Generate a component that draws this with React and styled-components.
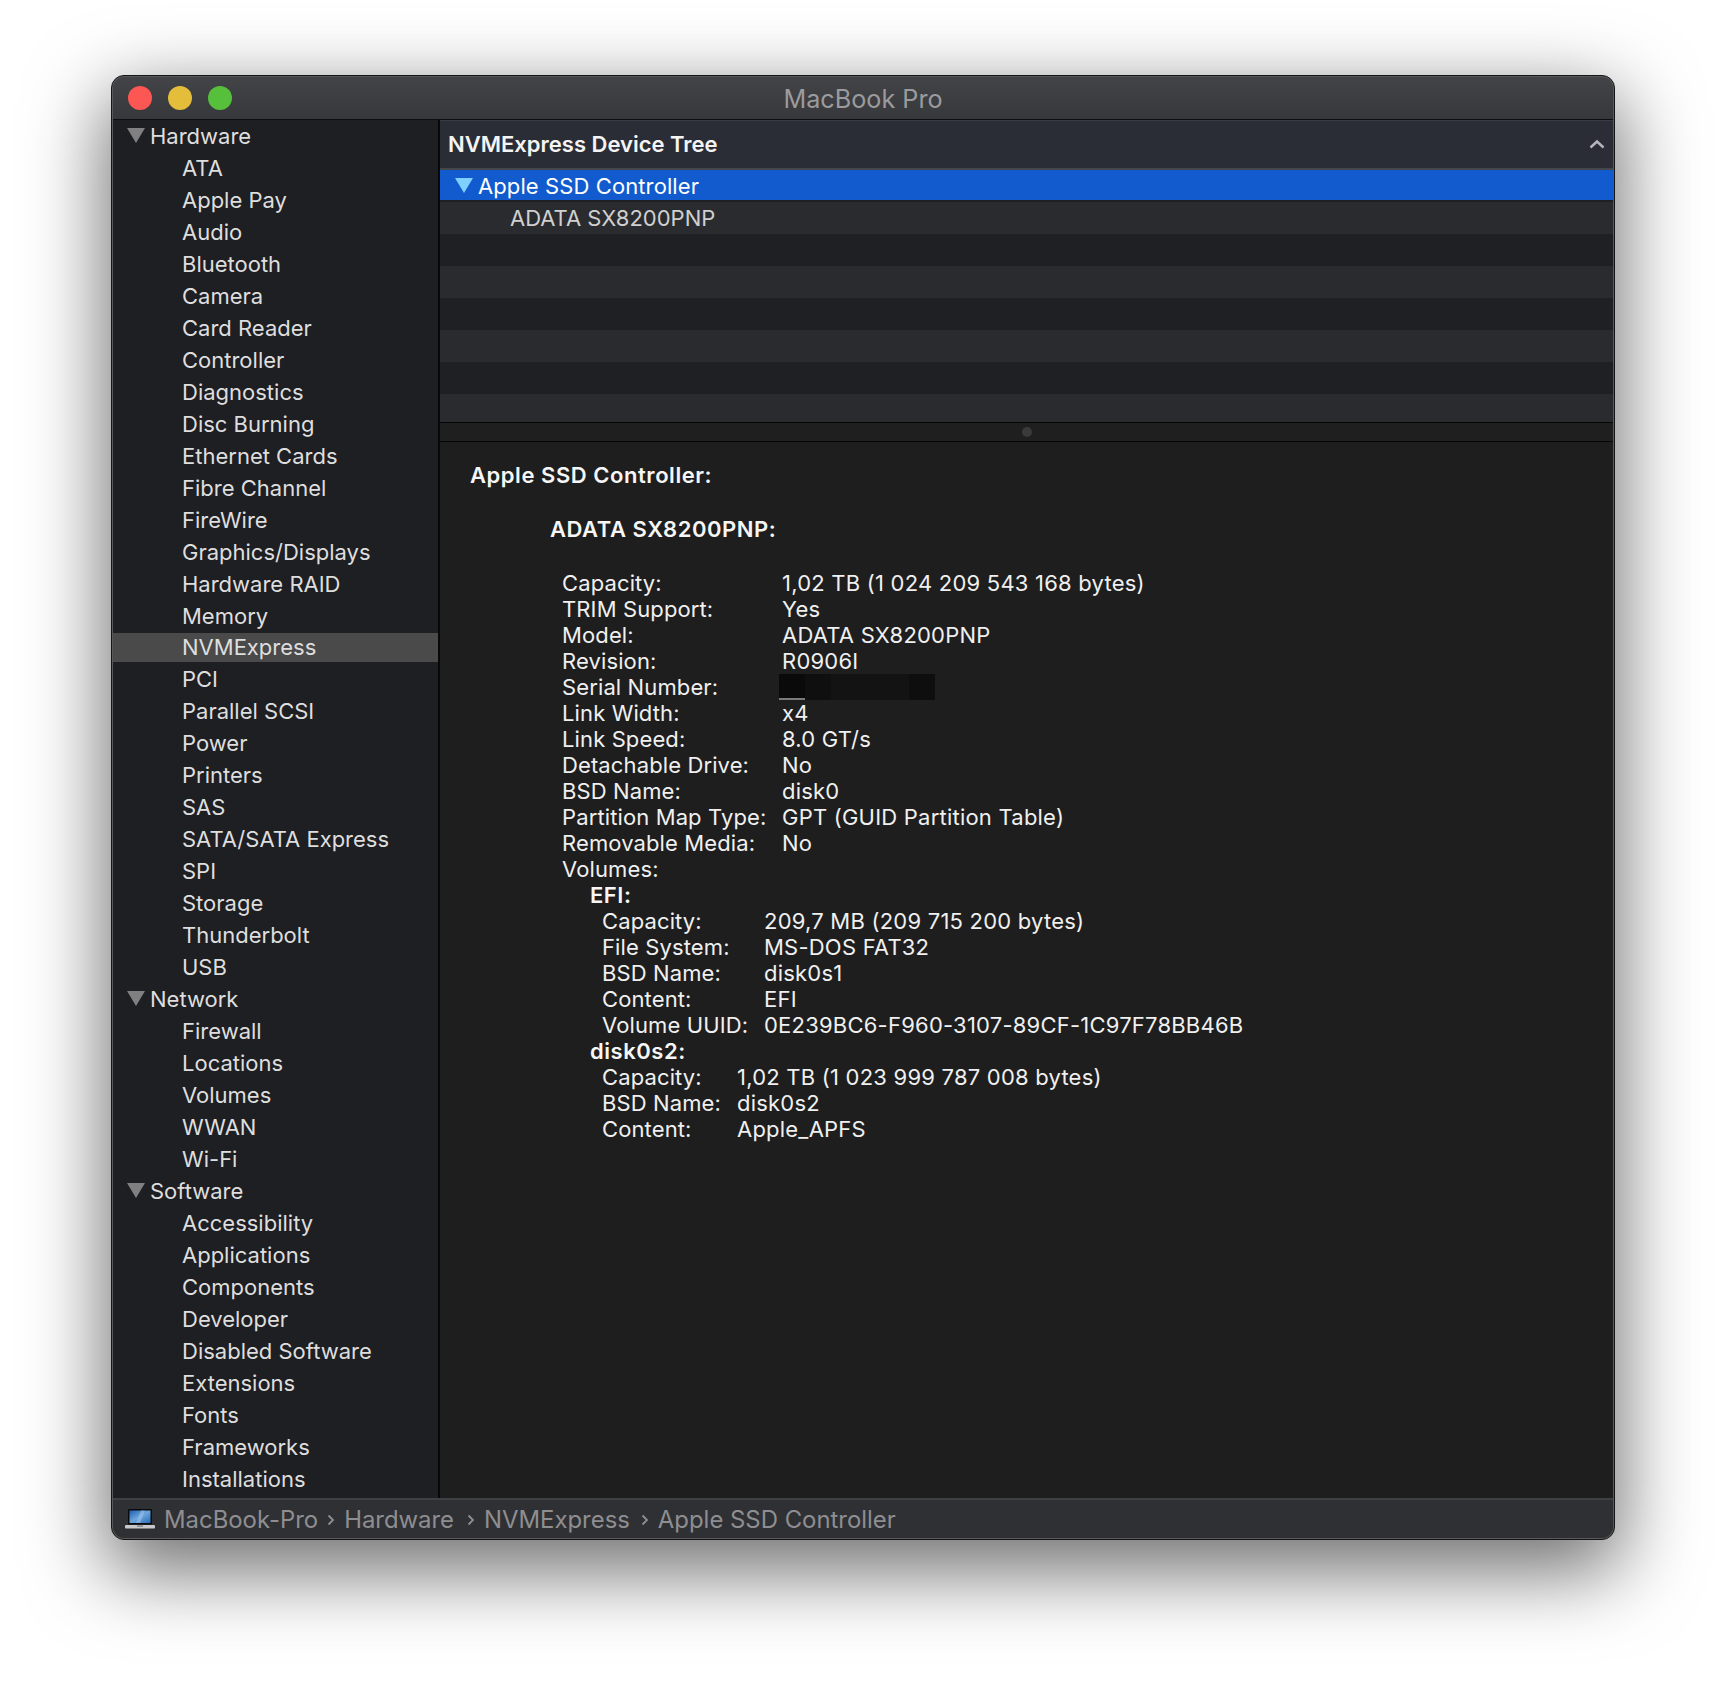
import React from "react";
import styled, { createGlobalStyle } from "styled-components";

const Global = createGlobalStyle`
  html, body { margin: 0; padding: 0; background: #fff; }
  body { font-family: Inter, "Liberation Sans", sans-serif; width: 1726px; height: 1688px; overflow: hidden; }
  * { box-sizing: border-box; }
`;

const Page = styled.div`
  padding: 75px 111px 0;
`;
const Window = styled.div`
  width: 1504px;
  height: 1465px;
  display: flex;
  flex-direction: column;
  border: 1px solid #151515;
  border-radius: 13px;
  padding: 1px;
  background: #59595c;
  box-shadow: 0 26px 78px 6px rgba(0, 0, 0, 0.56);
  overflow: hidden;
`;
const TitleBar = styled.div`
  height: 43px;
  flex: none;
  display: grid;
  grid-template-columns: 1fr auto 1fr;
  align-items: center;
  background: linear-gradient(#434448, #37383b);
  border-bottom: 1px solid #0d0d0d;
  border-radius: 11px 11px 0 0;
`;
const Lights = styled.div`
  display: flex;
  gap: 16px;
  margin-left: 15px;
`;
const Light = styled.span`
  width: 24px;
  height: 24px;
  border-radius: 50%;
  background: ${(p) => p.$color};
`;
const Title = styled.div`
  color: #9b9b9d;
  font-size: 25.2px;
  line-height: 30px;
  margin-top: 1px;
`;
const Main = styled.div`
  flex: 1;
  min-height: 0;
  display: flex;
`;
const Sidebar = styled.div`
  width: 327px;
  flex: none;
  background: #1e1f23;
  border-right: 2px solid #080808;
  overflow: hidden;
`;
const TreeRow = styled.div`
  height: 31.98px;
  display: flex;
  align-items: center;
  color: #dedede;
  font-size: 22px;
  padding-left: ${(p) => (p.$group ? "14px" : "69px")};
  position: relative;
  white-space: nowrap;
  &::before {
    content: "";
    display: ${(p) => (p.$selected ? "block" : "none")};
    position: absolute;
    left: 0;
    right: 0;
    top: 1px;
    bottom: 1px;
    background: #4a4a4a;
  }
`;
const RowText = styled.span`
  position: relative;
`;
const Triangle = styled.svg`
  width: 18px;
  height: 15px;
  flex: none;
  margin-right: ${(p) => p.$gap}px;
  margin-top: ${(p) => p.$top || 0}px;
`;
const Content = styled.div`
  flex: 1;
  min-width: 0;
  display: flex;
  flex-direction: column;
  background: #1e1e1e;
`;
const HeaderBar = styled.div`
  height: 50px;
  flex: none;
  display: flex;
  align-items: center;
  justify-content: space-between;
  padding: 0 8px 2px;
  background: #2b2d36;
  border-top: 1px solid #3a3b42;
  border-bottom: 2px solid #46474b;
  color: #f4f4f4;
  font-size: 22px;
  font-weight: 600;
`;
const Table = styled.div`
  height: 252px;
  flex: none;
  overflow: hidden;
  background: #1f2024;
`;
const SelectedRow = styled.div`
  height: 30px;
  margin-bottom: 2px;
  display: flex;
  align-items: center;
  padding-left: 15px;
  background: #115bce;
  color: #fff;
  font-size: 22px;
  letter-spacing: 0.1px;
`;
const SelectedLabel = styled.span`
  margin-top: 1px;
`;
const TableRow = styled.div`
  height: 32px;
  display: flex;
  align-items: center;
  padding-left: 70px;
  background: ${(p) => (p.$alt ? "#2a2b2f" : "#1f2024")};
  color: #d0d0d0;
  font-size: 22px;
`;
const Splitter = styled.div`
  height: 20px;
  flex: none;
  display: flex;
  align-items: center;
  justify-content: center;
  border-top: 1px solid #060606;
  border-bottom: 1px solid #060606;
  background: #1f1f1f;
`;
const SplitDot = styled.span`
  width: 10px;
  height: 10px;
  border-radius: 50%;
  background: #3a3a3a;
`;
const Details = styled.div`
  flex: 1;
  min-height: 0;
  padding: 20px 0 0 30px;
  color: #f0f0f0;
  font-size: 22px;
  line-height: 26px;
  white-space: nowrap;
`;
const Heading = styled.div`
  font-weight: 600;
  color: #f6f6f6;
  letter-spacing: 0.55px;
  margin-left: ${(p) => p.$indent || 0}px;
  margin-bottom: ${(p) => p.$after || 0}px;
`;
const Props = styled.div`
  display: grid;
  grid-template-columns: ${(p) => p.$label}px auto;
  justify-content: start;
  margin-left: ${(p) => p.$indent}px;
`;
const PropLabel = styled.span`
  letter-spacing: 0.12px;
`;
const PropValue = styled.span`
  letter-spacing: 0.22px;
`;
const Redacted = styled.div`
  width: 156px;
  height: 26px;
  margin-left: -3px;
  background:
    linear-gradient(#7a7a7a, #7a7a7a) 0 100% / 26px 2px no-repeat,
    linear-gradient(90deg, #0a0a0a 0 26px, #0f0f0f 26px 52px, #131313 52px 130px, #0e0e0e 130px);
`;
const StatusBar = styled.div`
  height: 40px;
  flex: none;
  display: flex;
  align-items: center;
  padding: 0 0 0 12px;
  background: #2f3034;
  border-top: 2px solid #3f4044;
  color: #8e8e91;
  font-size: 23.9px;
  white-space: nowrap;
  border-radius: 0 0 11px 11px;
`;
const Crumb = styled.span`
  margin-left: ${(p) => p.$left}px;
`;
const Sep = styled.svg`
  width: 8px;
  height: 12px;
  flex: none;
  margin-left: ${(p) => p.$left}px;
  margin-top: 2px;
`;
const Laptop = styled.svg`
  width: 30px;
  height: 20px;
  flex: none;
`;

const hardware = ["ATA","Apple Pay","Audio","Bluetooth","Camera","Card Reader","Controller","Diagnostics","Disc Burning","Ethernet Cards","Fibre Channel","FireWire","Graphics/Displays","Hardware RAID","Memory","NVMExpress","PCI","Parallel SCSI","Power","Printers","SAS","SATA/SATA Express","SPI","Storage","Thunderbolt","USB"];
const network = ["Firewall","Locations","Volumes","WWAN","Wi-Fi"];
const software = ["Accessibility","Applications","Components","Developer","Disabled Software","Extensions","Fonts","Frameworks","Installations"];

const groups = [["Hardware", hardware], ["Network", network], ["Software", software]];

const mainProps = [
  ["Capacity:", "1,02 TB (1 024 209 543 168 bytes)"],
  ["TRIM Support:", "Yes"],
  ["Model:", "ADATA SX8200PNP"],
  ["Revision:", "R0906I"],
  ["Serial Number:", null],
  ["Link Width:", "x4"],
  ["Link Speed:", "8.0 GT/s"],
  ["Detachable Drive:", "No"],
  ["BSD Name:", "disk0"],
  ["Partition Map Type:", "GPT (GUID Partition Table)"],
  ["Removable Media:", "No"],
  ["Volumes:", ""],
];
const efi = [
  ["Capacity:", "209,7 MB (209 715 200 bytes)"],
  ["File System:", "MS-DOS FAT32"],
  ["BSD Name:", "disk0s1"],
  ["Content:", "EFI"],
  ["Volume UUID:", "0E239BC6-F960-3107-89CF-1C97F78BB46B"],
];
const disk = [
  ["Capacity:", "1,02 TB (1 023 999 787 008 bytes)"],
  ["BSD Name:", "disk0s2"],
  ["Content:", "Apple_APFS"],
];

const Tri = ({ color, gap, top }) => (
  <Triangle $gap={gap} $top={top} viewBox="0 0 18 15">
    <path d="M0 0H18L9 15Z" fill={color} />
  </Triangle>
);

const PropList = ({ rows, label, indent }) => (
  <Props $label={label} $indent={indent}>
    {rows.map(([k, v]) => (
      <React.Fragment key={k}>
        <PropLabel>{k}</PropLabel>
        {v === null ? <Redacted /> : <PropValue>{v}</PropValue>}
      </React.Fragment>
    ))}
  </Props>
);

const Chevron = ({ left }) => (
  <Sep $left={left} viewBox="0 0 8 12">
    <path d="M1.5 1.5L6 6L1.5 10.5" fill="none" stroke="#8e8e91" strokeWidth="1.8" />
  </Sep>
);

export default function App() {
  return (
    <Page>
      <Global />
      <Window>
        <TitleBar>
          <Lights>
            <Light $color="#fc5753" />
            <Light $color="#e4bd3b" />
            <Light $color="#56bf3b" />
          </Lights>
          <Title>MacBook Pro</Title>
        </TitleBar>
        <Main>
          <Sidebar>
            {groups.map(([name, items]) => (
              <React.Fragment key={name}>
                <TreeRow $group>
                  <Tri color="#808080" gap={5} top={-1} />
                  <RowText>{name}</RowText>
                </TreeRow>
                {items.map((it) => (
                  <TreeRow key={it} $selected={it === "NVMExpress"}>
                    <RowText>{it}</RowText>
                  </TreeRow>
                ))}
              </React.Fragment>
            ))}
          </Sidebar>
          <Content>
            <HeaderBar>
              <span>NVMExpress Device Tree</span>
              <svg width="16" height="10" viewBox="0 0 16 10">
                <path d="M1.5 8.5L8 2.5L14.5 8.5" fill="none" stroke="#b4b4bc" strokeWidth="2.4" />
              </svg>
            </HeaderBar>
            <Table>
              <SelectedRow>
                <Tri color="#7fd0ff" gap={5} />
                <SelectedLabel>Apple SSD Controller</SelectedLabel>
              </SelectedRow>
              <TableRow $alt>ADATA SX8200PNP</TableRow>
              <TableRow />
              <TableRow $alt />
              <TableRow />
              <TableRow $alt />
              <TableRow />
              <TableRow $alt />
            </Table>
            <Splitter>
              <SplitDot />
            </Splitter>
            <Details>
              <Heading $after={28}>Apple SSD Controller:</Heading>
              <Heading $indent={80} $after={28}>ADATA SX8200PNP:</Heading>
              <PropList rows={mainProps} label={220} indent={92} />
              <Heading $indent={120}>EFI:</Heading>
              <PropList rows={efi} label={162} indent={132} />
              <Heading $indent={120}>disk0s2:</Heading>
              <PropList rows={disk} label={135} indent={132} />
            </Details>
          </Content>
        </Main>
        <StatusBar>
          <Laptop viewBox="0 0 30 20">
            <defs>
              <linearGradient id="scr" x1="0" y1="0" x2="1" y2="1">
                <stop offset="0" stopColor="#1d5fb0" />
                <stop offset="0.5" stopColor="#6ea6dc" />
                <stop offset="1" stopColor="#2a6cb8" />
              </linearGradient>
            </defs>
            <rect x="3" y="0" width="24" height="15.5" rx="1" fill="#0b0b0d" />
            <rect x="4.5" y="1.5" width="21" height="12.5" fill="url(#scr)" />
            <path d="M11 14L16 1.5H20L15 14Z" fill="#9cc6ec" opacity="0.55" />
            <rect x="0" y="16" width="30" height="3.5" rx="1" fill="#c9c9cc" />
            <rect x="12" y="16.5" width="6" height="1.2" fill="#77777a" />
          </Laptop>
          <Crumb $left={9}>MacBook-Pro</Crumb>
          <Chevron left={9} />
          <Crumb $left={9}>Hardware</Crumb>
          <Chevron left={13} />
          <Crumb $left={9}>NVMExpress</Crumb>
          <Chevron left={11} />
          <Crumb $left={9}>Apple SSD Controller</Crumb>
        </StatusBar>
      </Window>
    </Page>
  );
}
